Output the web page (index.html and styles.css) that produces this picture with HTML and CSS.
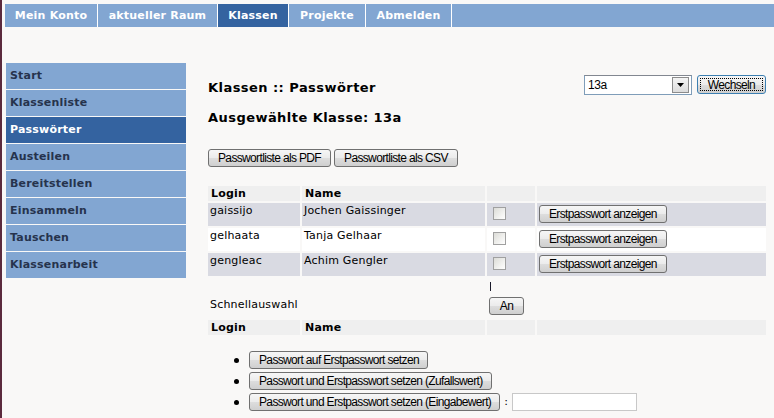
FILE: index.html
```html
<!DOCTYPE html>
<html lang="de">
<head>
<meta charset="utf-8">
<title>Klassen :: Passwörter</title>
<link rel="stylesheet" href="styles.css">
</head>
<body>
<nav class="topnav">
  <a class="tab tab-konto">Mein Konto</a>
  <a class="tab tab-raum">aktueller Raum</a>
  <a class="tab tab-klassen active">Klassen</a>
  <a class="tab tab-projekte">Projekte</a>
  <a class="tab tab-abmelden">Abmelden</a>
  <span class="tab-fill"></span>
</nav>
<div class="layout">
  <aside class="sidebar">
    <a class="side-item">Start</a>
    <a class="side-item">Klassenliste</a>
    <a class="side-item active">Passwörter</a>
    <a class="side-item">Austeilen</a>
    <a class="side-item">Bereitstellen</a>
    <a class="side-item">Einsammeln</a>
    <a class="side-item">Tauschen</a>
    <a class="side-item">Klassenarbeit</a>
  </aside>
  <main class="main">
    <div class="title-row">
      <h1 class="title">Klassen :: Passwörter</h1>
      <div class="class-select">
        <div class="select"><span class="select-val">13a</span><span class="select-btn"><svg width="7" height="4" viewBox="0 0 7 4"><path d="M0 0h7L3.5 4z" fill="#000"/></svg></span></div>
        <button class="btn btn-focus">Wechseln</button>
      </div>
    </div>
    <h2 class="subtitle">Ausgewählte Klasse: 13a</h2>
    <div class="export">
      <button class="btn">Passwortliste als PDF</button>
      <button class="btn">Passwortliste als CSV</button>
    </div>
    <table class="users">
      <colgroup><col class="c-login"><col class="c-name"><col class="c-check"><col></colgroup>
      <tr class="head"><th>Login</th><th>Name</th><th></th><th></th></tr>
      <tr class="odd"><td>gaissijo</td><td>Jochen Gaissinger</td><td><span class="check"></span></td><td><button class="btn btn-show">Erstpasswort anzeigen</button></td></tr>
      <tr class="even"><td>gelhaata</td><td>Tanja Gelhaar</td><td><span class="check"></span></td><td><button class="btn btn-show">Erstpasswort anzeigen</button></td></tr>
      <tr class="odd"><td>gengleac</td><td>Achim Gengler</td><td><span class="check"></span></td><td><button class="btn btn-show">Erstpasswort anzeigen</button></td></tr>
      <tr class="quick"><td colspan="2" class="quick-label">Schnellauswahl</td><td class="quick-cell"><span class="bar" aria-hidden="true"></span><button class="btn btn-an">An</button></td><td></td></tr>
      <tr class="head"><th>Login</th><th>Name</th><th></th><th></th></tr>
    </table>
    <ul class="actions">
      <li><button class="btn">Passwort auf Erstpasswort setzen</button></li>
      <li><button class="btn">Passwort und Erstpasswort setzen (Zufallswert)</button></li>
      <li><button class="btn">Passwort und Erstpasswort setzen (Eingabewert)</button><span class="colon">:</span><input class="pw-input" type="text"></li>
    </ul>
  </main>
</div>
</body>
</html>
```
FILE: styles.css
```css
html, body {
  margin: 0;
  padding: 0;
}
body {
  background: #f9f8f7;
  border-left: 2px solid #5b2a3d;
  min-height: 418px;
  box-sizing: border-box;
  font-family: "DejaVu Sans", Verdana, sans-serif;
  font-size: 11px;
  letter-spacing: 0.2px;
  color: #000;
  overflow: hidden;
}
.topnav {
  display: flex;
  margin: 4px 0 0 3px;
  height: 23px;
}
.tab {
  box-sizing: border-box;
  background: #82a6d2;
  color: #fff;
  font-weight: bold;
  font-size: 11px;
  line-height: 23px;
  text-align: center;
  border-right: 1px solid #fff;
  white-space: nowrap;
}
.tab-konto { width: 93px; }
.tab-raum { width: 120px; }
.tab-klassen { width: 71px; }
.tab-projekte { width: 77px; }
.tab-abmelden { width: 86px; }
.tab.active {
  background: #3463a0;
}
.tab-fill {
  flex: 1;
  background: #82a6d2;
}
.layout {
  display: flex;
  margin-top: 36px;
}
.sidebar {
  width: 180px;
  margin-left: 4px;
  display: flex;
  flex-direction: column;
  gap: 1px;
}
.side-item {
  background: #82a6d2;
  color: #26334d;
  font-weight: bold;
  font-size: 11px;
  height: 26px;
  line-height: 26px;
  padding-left: 4px;
}
.side-item.active {
  background: #3463a0;
  color: #fff;
}
.main {
  margin-left: 22px;
  width: 558px;
}
.title-row {
  display: flex;
  justify-content: space-between;
  align-items: flex-start;
  margin-top: 12px;
}
.title {
  font-size: 13px;
  font-weight: bold;
  letter-spacing: 0.45px;
  margin: 5px 0 0;
}
.class-select {
  display: flex;
  gap: 5px;
}
.select {
  width: 103px;
  height: 18px;
  border: 1px solid #7f9db9;
  border-top-color: #828790;
  background: #fff;
  display: flex;
  align-items: center;
  justify-content: space-between;
  font-family: "Liberation Sans", Arial, sans-serif;
  font-size: 12px;
  letter-spacing: -0.4px;
  padding-left: 3px;
}
.select-btn {
  width: 15px;
  height: 14px;
  margin-right: 2px;
  border: 1px solid #8c8c8c;
  background: linear-gradient(#f4f4f4, #dcdcdc);
  display: flex;
  align-items: center;
  justify-content: center;
}
.btn {
  font-family: "Liberation Sans", Arial, sans-serif;
  font-size: 12px;
  letter-spacing: -0.65px;
  color: #000;
  background: linear-gradient(#f6f6f6 0%, #ebebeb 50%, #dddddd 51%, #cfcfcf 100%);
  border: 1px solid #707070;
  border-radius: 3px;
  height: 18px;
  padding: 0 9px;
  margin: 0;
  line-height: 16px;
}
.btn-focus {
  border-color: #3c7fb1;
  outline: 1px dotted #000;
  outline-offset: -4px;
  height: 19px;
  width: 69px;
  padding: 0;
}
.subtitle {
  font-size: 13px;
  font-weight: bold;
  letter-spacing: 0.45px;
  margin: 15px 0 0;
}
.export {
  display: flex;
  gap: 3px;
  margin-top: 24px;
}
.users {
  border-spacing: 2px;
  margin: 17px 0 0 -2px;
  width: 562px;
  table-layout: fixed;
}
.c-login { width: 92px; }
.c-name { width: 183px; }
.c-check { width: 48px; }
.users th {
  text-align: left;
  font-weight: bold;
  font-size: 11px;
  height: 15px;
  padding: 0 0 0 3px;
  background: #efefef;
  line-height: 15px;
}
.users td {
  padding: 0 0 0 2px;
  font-size: 11px;
  vertical-align: top;
  line-height: 16px;
}
.users tr.odd td { background: #d9dae2; height: 23px; }
.users tr.even td { background: #fff; height: 23px; }
.btn-show {
  margin-top: 2px;
  padding: 0 9px;
}
.check {
  display: block;
  box-sizing: border-box;
  width: 13px;
  height: 13px;
  border: 1px solid #a0a0a0;
  background: linear-gradient(135deg, #dcdcd7, #fff);
  margin: 4px 0 0 4px;
}
.users tr.quick { height: 40px; }
.users td.quick-label { padding-top: 19px; }
.bar {
  display: block;
  width: 1px;
  height: 9px;
  background: #1a1a2a;
  margin: 4px 0 0 1px;
}
.btn-an { margin-top: 6px; width: 35px; padding: 0; display: block; }
.actions {
  margin: 14px 0 0;
  padding-left: 26px;
  list-style: none;
}
.actions li {
  height: 21px;
  display: flex;
  align-items: flex-start;
}
.actions li::before {
  content: "";
  width: 5px;
  height: 5px;
  border-radius: 50%;
  background: #000;
  margin: 7px 10px 0 0;
  flex: none;
}
.actions .btn {
  padding: 0 8px 0 9px;
}
.colon {
  margin: 0 4px 0 4px;
  line-height: 18px;
}
.pw-input {
  box-sizing: border-box;
  width: 125px;
  height: 18px;
  border: 1px solid #c8c8c8;
  background: #fff;
  margin: 0;
  padding: 0 2px;
}
```
